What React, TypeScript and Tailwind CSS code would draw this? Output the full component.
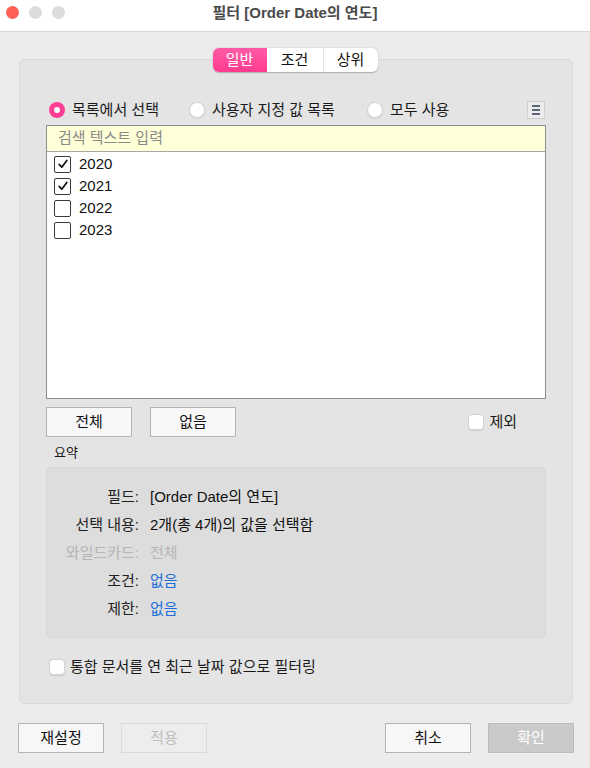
import type { ReactNode } from 'react'

const FONT = "font-['Liberation_Sans','Noto_Sans_CJK_KR',sans-serif]"

function Radio({ on, label }: { on?: boolean; label: string }) {
  return (
    <label className="flex items-center gap-[7px]">
      {on ? (
        <span className="flex h-[16px] w-[16px] items-center justify-center rounded-full bg-[#ff3f96]">
          <span className="h-[6px] w-[6px] rounded-full bg-white" />
        </span>
      ) : (
        <span className="h-[16px] w-[16px] rounded-full border border-[#d6d6d6] bg-white shadow-[0_0.5px_1px_rgba(0,0,0,0.12)]" />
      )}
      <span>{label}</span>
    </label>
  )
}

function ListCheck({ on, label }: { on?: boolean; label: string }) {
  return (
    <div className="flex h-[22px] items-center gap-[8px] pl-[7px]">
      <span className="flex h-[17px] w-[17px] items-center justify-center rounded-[2px] border-[1.5px] border-[#3a3a3a] bg-white">
        {on && (
          <svg viewBox="0 0 12 12" className="h-[12px] w-[12px]">
            <path d="M2.2 6.4 L4.8 9.2 L9.8 2.4" fill="none" stroke="#111" strokeWidth="1.7" strokeLinecap="round" strokeLinejoin="round" />
          </svg>
        )}
      </span>
      <span className="text-[15px] text-[#111]">{label}</span>
    </div>
  )
}

function SoftCheck({ label }: { label: string }) {
  return (
    <label className="flex items-center gap-[5px]">
      <span className="h-[16px] w-[16px] rounded-[4px] border border-[#d4d4d4] bg-white shadow-[0_0.5px_1px_rgba(0,0,0,0.1)]" />
      <span>{label}</span>
    </label>
  )
}

function Btn({ children, kind = 'normal' }: { children: ReactNode; kind?: 'normal' | 'disabled' | 'primary' }) {
  const styles = {
    normal: 'border-[#b4b4b4] bg-[#f7f7f7] text-[#111]',
    disabled: 'border-[#d9d9d9] bg-[#ededed] text-[#bdbdbd]',
    primary: 'border-[#bdbdbd] bg-[#cacaca] text-white',
  }[kind]
  return (
    <button className={`flex h-[30px] w-[86px] items-center justify-center border text-[15px] ${styles}`}>
      {children}
    </button>
  )
}

function Row({ label, value, dim, link }: { label: string; value: string; dim?: boolean; link?: boolean }) {
  return (
    <>
      <div className={`text-right ${dim ? 'text-[#b5b5b5]' : 'text-[#222]'}`}>{label}</div>
      <div className={dim ? 'text-[#b5b5b5]' : link ? 'text-[#1a6fdc]' : 'text-[#111]'}>{value}</div>
    </>
  )
}

export default function App() {
  return (
    <div className={`flex h-[768px] w-[590px] flex-col bg-[#ececec] text-[15px] text-[#1a1a1a] ${FONT}`}>
      {/* title bar */}
      <div className="relative flex h-[32px] shrink-0 items-center justify-center border-b border-[#d8d8d8] bg-white pb-[4px]">
        <div className="absolute left-[6px] top-[6px] flex gap-[10px]">
          <span className="h-[13px] w-[13px] rounded-full bg-[#fe5f57]" />
          <span className="h-[13px] w-[13px] rounded-full bg-[#dcdcdc]" />
          <span className="h-[13px] w-[13px] rounded-full bg-[#dcdcdc]" />
        </div>
        <span className="text-[15px] font-bold text-[#4a4a4a]">필터 [Order Date의 연도]</span>
      </div>

      {/* tabs */}
      <div className="relative z-10 mt-[16px] flex justify-center">
        <div className="flex h-[24px] overflow-hidden rounded-[6px] bg-white shadow-[0_0.5px_1.5px_rgba(0,0,0,0.25)]">
          <div className="flex w-[54px] items-center justify-center bg-gradient-to-b from-[#ff5aa6] to-[#ff3b8e] text-white">일반</div>
          <div className="flex w-[56px] items-center justify-center text-[#111]">조건</div>
          <div className="flex w-[55px] items-center justify-center border-l border-[#e2e2e2] text-[#111]">상위</div>
        </div>
      </div>

      {/* panel */}
      <div className="-mt-[13px] ml-[19px] mr-[17px] flex h-[645px] flex-col rounded-[6px] border border-[#dadada] bg-[#e4e4e4] px-[26px] pt-[40px]">
        <div className="flex h-[20px] items-center pl-[3px]">
          <div className="w-[140px]"><Radio on label="목록에서 선택" /></div>
          <div className="w-[178px]"><Radio label="사용자 지정 값 목록" /></div>
          <Radio label="모두 사용" />
          <div className="ml-auto mr-[1px] flex h-[18px] w-[18px] items-center justify-center border border-[#cfcfcf] bg-[#ececec]">
            <div className="flex flex-col gap-[2px]">
              <span className="h-[2px] w-[8px] bg-[#5a6878]" />
              <span className="h-[2px] w-[8px] bg-[#5a6878]" />
              <span className="h-[2px] w-[8px] bg-[#5a6878]" />
            </div>
          </div>
        </div>

        {/* list */}
        <div className="mt-[5px] flex h-[274px] flex-col border border-[#8e8e8e] bg-white">
          <div className="flex h-[26px] items-center border-b border-[#a8a8a8] bg-[#ffffd8] pl-[11px] text-[#8a8a8a]">검색 텍스트 입력</div>
          <div className="pt-[1px]">
            <ListCheck on label="2020" />
            <ListCheck on label="2021" />
            <ListCheck label="2022" />
            <ListCheck label="2023" />
          </div>
        </div>

        <div className="mt-[8px] flex items-center gap-[18px]">
          <Btn>전체</Btn>
          <Btn>없음</Btn>
          <div className="ml-auto mr-[29px]"><SoftCheck label="제외" /></div>
        </div>

        <div className="mt-[6px] pl-[8px] text-[13px] text-[#1a1a1a]">요약</div>

        <div className="mt-[4px] grid h-[171px] grid-cols-[92px_1fr] content-start gap-x-[11px] rounded-[5px] border border-[#d6d6d6] bg-[#dddddd] pt-[15px] leading-[28px]">
          <Row label="필드:" value="[Order Date의 연도]" />
          <Row label="선택 내용:" value="2개(총 4개)의 값을 선택함" />
          <Row label="와일드카드:" value="전체" dim />
          <Row label="조건:" value="없음" link />
          <Row label="제한:" value="없음" link />
        </div>

        <div className="mt-[18px] pl-[3px]"><SoftCheck label="통합 문서를 연 최근 날짜 값으로 필터링" /></div>
      </div>

      {/* footer buttons */}
      <div className="ml-[18px] mr-[16px] mt-[19px] flex gap-[17px]">
        <Btn>재설정</Btn>
        <Btn kind="disabled">적용</Btn>
        <div className="ml-auto flex gap-[17px]">
          <Btn>취소</Btn>
          <Btn kind="primary">확인</Btn>
        </div>
      </div>
    </div>
  )
}
